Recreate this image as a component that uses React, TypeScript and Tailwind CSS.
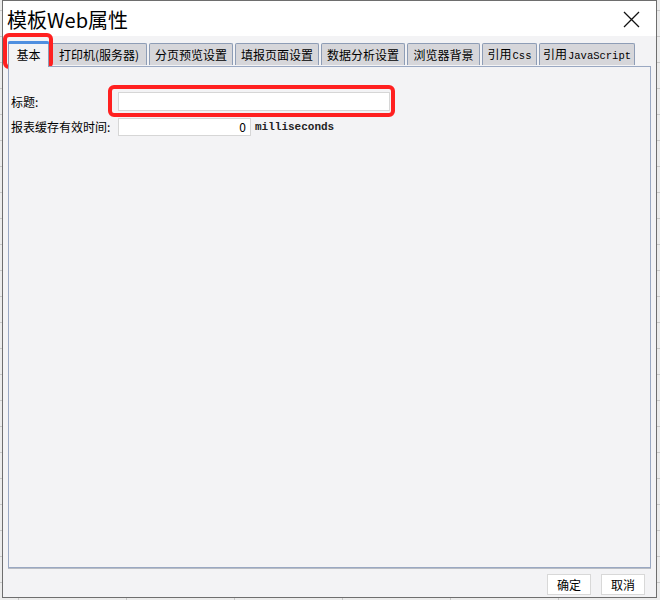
import React from "react";

const cjk = { fontFamily: '"Noto Sans CJK SC", "Noto Sans", sans-serif' };
const mono = { fontFamily: '"Liberation Mono", "DejaVu Sans Mono", monospace' };

const tabs: { label: React.ReactNode; w: number }[] = [
  { label: "打印机(服务器)", w: 96 },
  { label: "分页预览设置", w: 84 },
  { label: "填报页面设置", w: 84 },
  { label: "数据分析设置", w: 84 },
  { label: "浏览器背景", w: 73 },
  {
    label: (
      <>
        引用<span style={mono} className="text-[10.5px] ml-[1px]">Css</span>
      </>
    ),
    w: 55,
  },
  {
    label: (
      <>
        引用<span style={mono} className="text-[10.5px] ml-[1px]">JavaScript</span>
      </>
    ),
    w: 96,
  },
];

export default function App() {
  return (
    <div
      className="w-[660px] h-[600px] overflow-hidden bg-[#ececec] pl-[2px] bg-[linear-gradient(#c8c8c8_1px,transparent_1px),linear-gradient(90deg,#c8c8c8_1px,transparent_1px)] bg-[size:108px_26px] bg-[position:18px_10px]"
      style={cjk}
    >
      <div className="w-[655px] h-[598px] border border-[#6e6e6e] bg-[#f3f3f5] flex flex-col">
        {/* title bar */}
        <div className="h-[35px] bg-white flex items-center justify-between pl-[4px] pr-[16px] shrink-0">
          <span className="text-[20px] text-black leading-none mt-[2px]">模板Web属性</span>
          <svg width="17" height="17" viewBox="0 0 17 17" className="mt-[1px]">
            <path d="M1 1 L16 16 M16 1 L1 16" stroke="#111" strokeWidth="1.3" fill="none" />
          </svg>
        </div>

        {/* tabs */}
        <div className="relative flex items-end pl-[5px] pt-[4px] h-[30px] shrink-0">
          <div className="relative w-[41px] h-[26px] bg-[#f3f3f5] border-x border-[#8e9db6] rounded-t-[2px] flex items-center justify-center text-[12px] text-black z-10 -mb-[1px]">
            <div className="absolute top-0 left-[-1px] right-[-1px] h-[3px] bg-[#4f8fe0] rounded-t-[2px]" />
            <span className="mt-[2px]">基本</span>
          </div>
          {tabs.map((t, i) => (
            <div
              key={i}
              style={{ width: t.w }}
              className="ml-[2px] h-[22px] bg-[#d6d6da] border border-b-0 border-[#8e9db6] rounded-t-[2px] flex items-center justify-center text-[12px] text-black mb-[1px]"
            >
              <span className="whitespace-nowrap">{t.label}</span>
            </div>
          ))}
          {/* red annotation around 基本 */}
          <div className="absolute left-[0px] top-[-3px] w-[50px] h-[36px] border-[4px] border-[#ff2020] rounded-[6px]" />
        </div>

        {/* panel */}
        <div className="relative mx-[5px] h-[502px] border border-[#9aa8c2] shadow-[0_1px_0_#b8bcc4] bg-[#f3f3f5] pt-[25px] pl-[2px] flex flex-col gap-[7px] shrink-0">
          <div className="flex items-center h-[19px]">
            <span className="w-[107px] text-[12px] text-black">标题:</span>
            <div className="w-[272px] h-[19px] bg-white border border-[#d6d6d6]" />
          </div>
          <div className="flex items-center h-[18px]">
            <span className="w-[107px] text-[12px] text-black whitespace-nowrap">报表缓存有效时间:</span>
            <div className="w-[133px] h-[18px] bg-white border border-[#d6d6d6] flex items-center justify-end pr-[4px] text-[12px] text-black">
              0
            </div>
            <span style={mono} className="ml-[4px] text-[11px] font-bold text-[#222]">
              milliseconds
            </span>
          </div>
          {/* red annotation around title input */}
          <div className="absolute left-[99px] top-[18px] w-[287px] h-[32px] border-[4px] border-[#ff2020] rounded-[6px]" />
        </div>

        {/* buttons */}
        <div className="flex justify-end gap-[10px] pr-[11px] mt-[6px]">
          <button className="w-[44px] h-[21px] bg-white border border-[#d8d8d8] text-[12px] text-black">确定</button>
          <button className="w-[44px] h-[21px] bg-white border border-[#d8d8d8] text-[12px] text-black">取消</button>
        </div>
      </div>
    </div>
  );
}
